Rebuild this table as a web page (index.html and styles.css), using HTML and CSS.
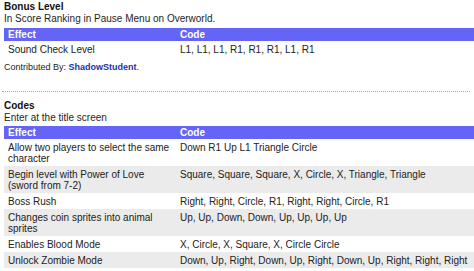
FILE: index.html
```html
<!DOCTYPE html>
<html>
<head>
<meta charset="utf-8">
<link rel="stylesheet" href="styles.css">
</head>
<body>
<div class="page">
  <section class="block first">
    <h3 class="title">Bonus Level</h3>
    <p class="sub">In Score Ranking in Pause Menu on Overworld.</p>
    <table class="codes">
      <thead>
        <tr><th class="c1">Effect</th><th class="c2">Code</th></tr>
      </thead>
      <tbody>
        <tr><td>Sound Check Level</td><td>L1, L1, L1, R1, R1, R1, L1, R1</td></tr>
      </tbody>
    </table>
    <p class="credit">Contributed By: <a class="user">ShadowStudent</a>.</p>
  </section>
  <div class="sep"></div>
  <section class="block">
    <h3 class="title">Codes</h3>
    <p class="sub">Enter at the title screen</p>
    <table class="codes second">
      <thead>
        <tr><th class="c1">Effect</th><th class="c2">Code</th></tr>
      </thead>
      <tbody>
        <tr><td>Allow two players to select the same character</td><td>Down R1 Up L1 Triangle Circle</td></tr>
        <tr class="alt"><td>Begin level with Power of Love (sword from 7-2)</td><td>Square, Square, Square, X, Circle, X, Triangle, Triangle</td></tr>
        <tr><td>Boss Rush</td><td>Right, Right, Circle, R1, Right, Right, Circle, R1</td></tr>
        <tr class="alt"><td>Changes coin sprites into animal sprites</td><td>Up, Up, Down, Down, Up, Up, Up, Up</td></tr>
        <tr><td>Enables Blood Mode</td><td>X, Circle, X, Square, X, Circle Circle</td></tr>
        <tr class="alt"><td>Unlock Zombie Mode</td><td>Down, Up, Right, Down, Up, Right, Down, Up, Right, Right, Right</td></tr>
      </tbody>
    </table>
  </section>
</div>
</body>
</html>
```

FILE: styles.css
```css
html, body {
  margin: 0;
  padding: 0;
  background: #ffffff;
}
body {
  font-family: "Liberation Sans", Arial, sans-serif;
  font-size: 10px;
  color: #1e1e1e;
  overflow: hidden;
}
.page {
  width: 470px;
  padding: 1px 0 0 4px;
}
.title {
  margin: 0;
  font-size: 10px;
  line-height: 12px;
  font-weight: bold;
  color: #111;
}
.sub {
  margin: 0;
  line-height: 11px;
}
.codes {
  width: 470px;
  margin-top: 4px;
  border-collapse: collapse;
  border-spacing: 0;
}
.codes.second {
  margin-top: 3px;
}
.codes th {
  background: #6464f6;
  color: #ffffff;
  font-weight: bold;
  text-align: left;
  line-height: 11px;
  padding: 1px 4px;
}
.codes .c1 {
  width: 164px;
}
.codes td {
  vertical-align: top;
  line-height: 11px;
  padding: 3px 4px 2px 4px;
  color: #222;
}
.codes tr.alt td {
  background: #ebebeb;
}
.credit {
  margin: 5px 0 0 0;
  font-size: 9px;
  line-height: 11px;
  color: #222;
}
.user {
  color: #2233aa;
  font-weight: bold;
}
.sep {
  margin: 18px 4px 8px -2px;
  border-top: 1px dotted #a8a8a8;
}
```
